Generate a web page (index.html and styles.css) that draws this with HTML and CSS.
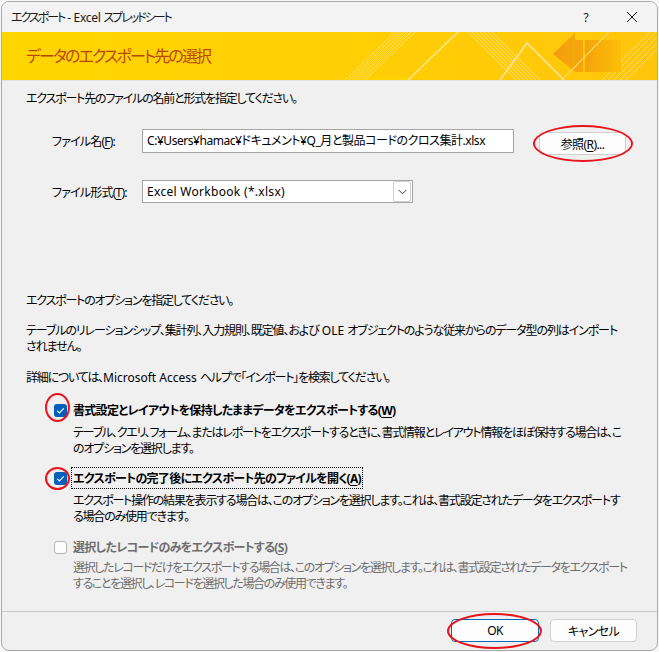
FILE: index.html
```html
<!DOCTYPE html>
<html lang="ja">
<head>
    <meta charset="UTF-8">
    <meta name="viewport" content="width=device-width, initial-scale=1.0">
    <title>エクスポート - Excel スプレッドシート</title>
    <link rel="stylesheet" href="styles.css">
</head>
<body>
    <div class="window">
        <div class="titlebar">
            <span class="title">エクスポート<span class="latin"> - Excel </span>スプレッドシート</span>
            <span class="help">?</span>
            <span class="close">
                <svg width="12" height="12" viewBox="0 0 12 12"><path d="M1 1L11 11M11 1L1 11" stroke="#1a1a1a" stroke-width="1"/></svg>
            </span>
        </div>

        <div class="banner">
            <svg class="banner-art" width="655" height="48" viewBox="0 0 655 48" preserveAspectRatio="none">
                <defs>
                    <linearGradient id="base" x1="0" x2="1" y1="0" y2="0">
                        <stop offset="0" stop-color="#ffd500"/>
                        <stop offset="0.55" stop-color="#ffcf05"/>
                        <stop offset="1" stop-color="#ffc50d"/>
                    </linearGradient>
                    <linearGradient id="arrow" x1="0" x2="1" y1="0" y2="0">
                        <stop offset="0" stop-color="#f39a12"/>
                        <stop offset="1" stop-color="#f6a90c"/>
                    </linearGradient>
                    <linearGradient id="arrow2" x1="0" x2="1" y1="0" y2="0">
                        <stop offset="0" stop-color="#f5a30c"/>
                        <stop offset="1" stop-color="#fdbf08"/>
                    </linearGradient>
                    <radialGradient id="glow" cx="0.5" cy="1" r="0.6">
                        <stop offset="0" stop-color="#ffe600"/>
                        <stop offset="1" stop-color="#ffe600" stop-opacity="0"/>
                    </radialGradient>
                </defs>
                <rect width="655" height="48" fill="url(#base)"/>
                <ellipse cx="388" cy="46" rx="40" ry="22" fill="url(#glow)"/>
                <g stroke="#ffe27a" stroke-width="1" opacity="0.9">
                    <path d="M343 48L393 0M347 48L397 0M351 48L401 0M355 48L405 0M359 48L409 0M363 48L413 0"/>
                    <path d="M466 0L514 48M470 0L518 48M474 0L522 48M478 0L526 48M482 0L530 48M486 0L534 48M490 0L538 48"/>
                    <path d="M600 48L648 0M606 48L654 0M612 48L660 0M618 48L666 0M624 48L672 0"/>
                </g>
                <path d="M406 48L456 0" stroke="#ffe98a" stroke-width="1.5"/>
                <polygon points="551,22 573,1 573,40" fill="url(#arrow)"/>
                <rect x="573" y="8" width="8" height="32" fill="#f6a40e"/>
                <rect x="583" y="8" width="36" height="32" fill="url(#arrow2)"/>
                <path d="M498 48L525 11L562 48" fill="none" stroke="#ffe7a0" stroke-width="1.5"/>
                <path d="M560 48L607 0" stroke="#ffdf70" stroke-width="1.2" opacity="0.8"/>
            </svg>
            <h1 class="banner-title">データのエクスポート先の選択</h1>
        </div>

        <div class="content">
            <p class="intro">エクスポート先のファイルの名前と形式を指定してください。</p>

            <div class="field-row file-row">
                <label class="field-label">ファイル名(<u>F</u>):</label>
                <div class="text-input">C:¥Users¥hamac¥ドキュメント¥Q_月と製品コードのクロス集計.xlsx</div>
                <span class="marked browse-wrap">
                    <button class="btn browse">参照(<u>R</u>)...</button>
                    <span class="ring ring-browse"></span>
                </span>
            </div>

            <div class="field-row type-row">
                <label class="field-label">ファイル形式(<u>T</u>):</label>
                <div class="select">
                    <span class="select-value">Excel Workbook (*.xlsx)</span>
                    <span class="select-arrow">
                        <svg width="9" height="6" viewBox="0 0 9 6"><path d="M0.5 0.8L4.5 4.8L8.5 0.8" fill="none" stroke="#444" stroke-width="1"/></svg>
                    </span>
                </div>
            </div>

            <p class="options-head">エクスポートのオプションを指定してください。</p>
            <p class="note">テーブルのリレーションシップ、集計列、入力規則、既定値、および<span class="latin"> OLE </span>オブジェクトのような従来からのデータ型の列はインポート<br>されません。</p>
            <p class="note help-note">詳細については、<span class="latin">Microsoft Access </span>ヘルプで「インポート」を検索してください。</p>

            <div class="option opt-keep">
                <div class="option-line">
                    <span class="marked">
                        <span class="checkbox checked">
                            <svg width="13" height="13" viewBox="0 0 13 13"><path d="M3.2 6.8L5.4 9L9.8 4.4" fill="none" stroke="#fff" stroke-width="1.2"/></svg>
                        </span>
                        <span class="ring ring-check1"></span>
                    </span>
                    <span class="option-label">書式設定とレイアウトを保持したままデータをエクスポートする(<u>W</u>)</span>
                </div>
                <p class="option-desc">テーブル、クエリ、フォーム、またはレポートをエクスポートするときに、書式情報とレイアウト情報をほぼ保持する場合は、こ<br>のオプションを選択します。</p>
            </div>

            <div class="option opt-open">
                <div class="option-line">
                    <span class="marked">
                        <span class="checkbox checked">
                            <svg width="13" height="13" viewBox="0 0 13 13"><path d="M3.2 6.8L5.4 9L9.8 4.4" fill="none" stroke="#fff" stroke-width="1.2"/></svg>
                        </span>
                        <span class="ring ring-check2"></span>
                    </span>
                    <span class="option-label focused">エクスポートの完了後にエクスポート先のファイルを開く(<u>A</u>)</span>
                </div>
                <p class="option-desc">エクスポート操作の結果を表示する場合は、このオプションを選択します。これは、書式設定されたデータをエクスポートす<br>る場合のみ使用できます。</p>
            </div>

            <div class="option opt-selected disabled">
                <div class="option-line">
                    <span class="checkbox"></span>
                    <span class="option-label">選択したレコードのみをエクスポートする(<u>S</u>)</span>
                </div>
                <p class="option-desc narrow">選択したレコードだけをエクスポートする場合は、このオプションを選択します。これは、書式設定されたデータをエクスポート<br>することを選択し、レコードを選択した場合のみ使用できます。</p>
            </div>
        </div>

        <div class="footer">
            <span class="marked">
                <button class="btn ok">OK</button>
                <span class="ring ring-ok"></span>
            </span>
            <button class="btn cancel">キャンセル</button>
            <svg class="grip" width="10" height="10" viewBox="0 0 10 10" fill="#9a9a9a">
                <rect x="8" y="0" width="2" height="2"/>
                <rect x="4" y="4" width="2" height="2"/><rect x="8" y="4" width="2" height="2"/>
                <rect x="0" y="8" width="2" height="2"/><rect x="4" y="8" width="2" height="2"/><rect x="8" y="8" width="2" height="2"/>
            </svg>
        </div>
    </div>
</body>
</html>
```

FILE: styles.css
```css
body {
    margin: 0;
    background-color: #f7f7f7;
    font-family: "Noto Sans", "Noto Sans CJK JP", sans-serif;
    font-size: 12px;
    font-feature-settings: "palt";
    letter-spacing: -1.2px;
    color: #000;
}
p {
    margin: 0;
    line-height: 16px;
}
u {
    text-underline-offset: 2px;
}
.latin {
    letter-spacing: 0;
}
.window {
    position: relative;
    margin: 1px 1px 1px 1px;
    height: 648px;
    border: 1px solid #a9a9a9;
    border-radius: 8px;
    background-color: #f0f0f0;
    overflow: hidden;
}
.titlebar {
    display: flex;
    align-items: center;
    height: 30px;
    padding-left: 9px;
    background-color: #f3f3f3;
}
.title {
    flex: 1;
    letter-spacing: -2px;
    color: #1a1a1a;
}
.title .latin {
    letter-spacing: -0.3px;
}
.help {
    width: 16px;
    margin-right: 30px;
    text-align: center;
    color: #1a1a1a;
    letter-spacing: 0;
}
.close {
    display: flex;
    width: 16px;
    margin-right: 17px;
    justify-content: center;
}
.banner {
    position: relative;
    height: 48px;
    border-bottom: 1px solid #e2e2e2;
}
.banner-art {
    position: absolute;
    left: 0;
    top: 0;
}
.banner-title {
    position: relative;
    margin: 0;
    padding-left: 24px;
    line-height: 48px;
    font-size: 16px;
    font-weight: normal;
    letter-spacing: -1.9px;
    color: #b8480a;
}
.content {
    padding: 10px 24px 19px 24px;
    border-bottom: 1px solid #c9c9c9;
}
.field-row {
    display: flex;
    align-items: center;
    padding-left: 26px;
}
.file-row {
    margin-top: 22px;
    height: 24px;
}
.type-row {
    margin-top: 27px;
    height: 23px;
}
.field-label {
    width: 90px;
    letter-spacing: -0.8px;
}
.text-input {
    width: 366px;
    height: 22px;
    padding-left: 4px;
    line-height: 22px;
    letter-spacing: -0.45px;
    background-color: #fff;
    border: 1px solid #a5a5a5;
    white-space: nowrap;
    overflow: hidden;
}
.marked {
    position: relative;
    display: inline-flex;
}
.browse-wrap {
    margin-left: 25px;
    margin-top: 5px;
}
.btn {
    height: 23px;
    padding: 0;
    font-family: inherit;
    font-size: 12px;
    font-feature-settings: "palt";
    letter-spacing: -0.6px;
    color: #000;
    background-color: #fdfdfd;
    border: 1px solid #d0d0d0;
    border-radius: 4px;
}
.browse {
    width: 87px;
}
.select {
    display: flex;
    align-items: center;
    width: 269px;
    height: 21px;
    background-color: #fff;
    border: 1px solid #a5a5a5;
}
.select-value {
    flex: 1;
    padding-left: 4px;
    letter-spacing: 0.3px;
}
.select-arrow {
    display: flex;
    align-items: center;
    justify-content: center;
    width: 16px;
    height: 19px;
    margin-right: 1px;
    border: 1px solid #d2d2d2;
    border-radius: 2px;
}
.options-head {
    margin-top: 90px;
}
.note {
    margin-top: 14px;
    letter-spacing: -1.1px;
}
.help-note {
    margin-top: 15px;
    letter-spacing: -1.2px;
}
.option {
    padding-left: 28px;
}
.opt-keep {
    margin-top: 16px;
}
.opt-open {
    margin-top: 13px;
}
.opt-selected {
    margin-top: 14px;
}
.option-line {
    display: flex;
    align-items: center;
    height: 16px;
}
.checkbox {
    display: block;
    width: 11px;
    height: 11px;
    border: 1px solid #b5b5b5;
    border-radius: 3px;
    background-color: #fdfdfd;
}
.checkbox.checked {
    width: 13px;
    height: 13px;
    border: none;
    background-color: #005fb8;
}
.checkbox svg {
    display: block;
}
.option-label {
    margin-left: 6px;
    font-weight: bold;
    letter-spacing: -0.7px;
}
.focused {
    outline: 1px dotted #000;
    outline-offset: 1px;
}
.option-desc {
    margin-top: 7px;
    padding-left: 19px;
    white-space: nowrap;
}
.option-desc.narrow {
    letter-spacing: -1.35px;
}
.opt-selected .option-desc {
    margin-top: 5px;
}
.disabled {
    color: #6d6d6d;
}
.ring {
    position: absolute;
    border: 2px solid #e8141b;
    border-radius: 50%;
    pointer-events: none;
}
.ring-browse {
    left: -6px;
    right: -7px;
    top: -7px;
    bottom: -7px;
}
.ring-check1 {
    left: -9px;
    right: -3px;
    top: -11px;
    bottom: -5px;
}
.ring-check2 {
    left: -9px;
    right: -3px;
    top: -5px;
    bottom: -5px;
}
.ring-ok {
    left: -4px;
    right: -3px;
    top: -6px;
    bottom: -7px;
}
.footer {
    position: relative;
    display: flex;
    justify-content: flex-end;
    gap: 11px;
    padding: 7px 20px 0 0;
}
.ok {
    width: 88px;
    border: 1px solid #0067c0;
}
.cancel {
    width: 87px;
}
.grip {
    position: absolute;
    right: 2px;
    bottom: -18px;
}
```
